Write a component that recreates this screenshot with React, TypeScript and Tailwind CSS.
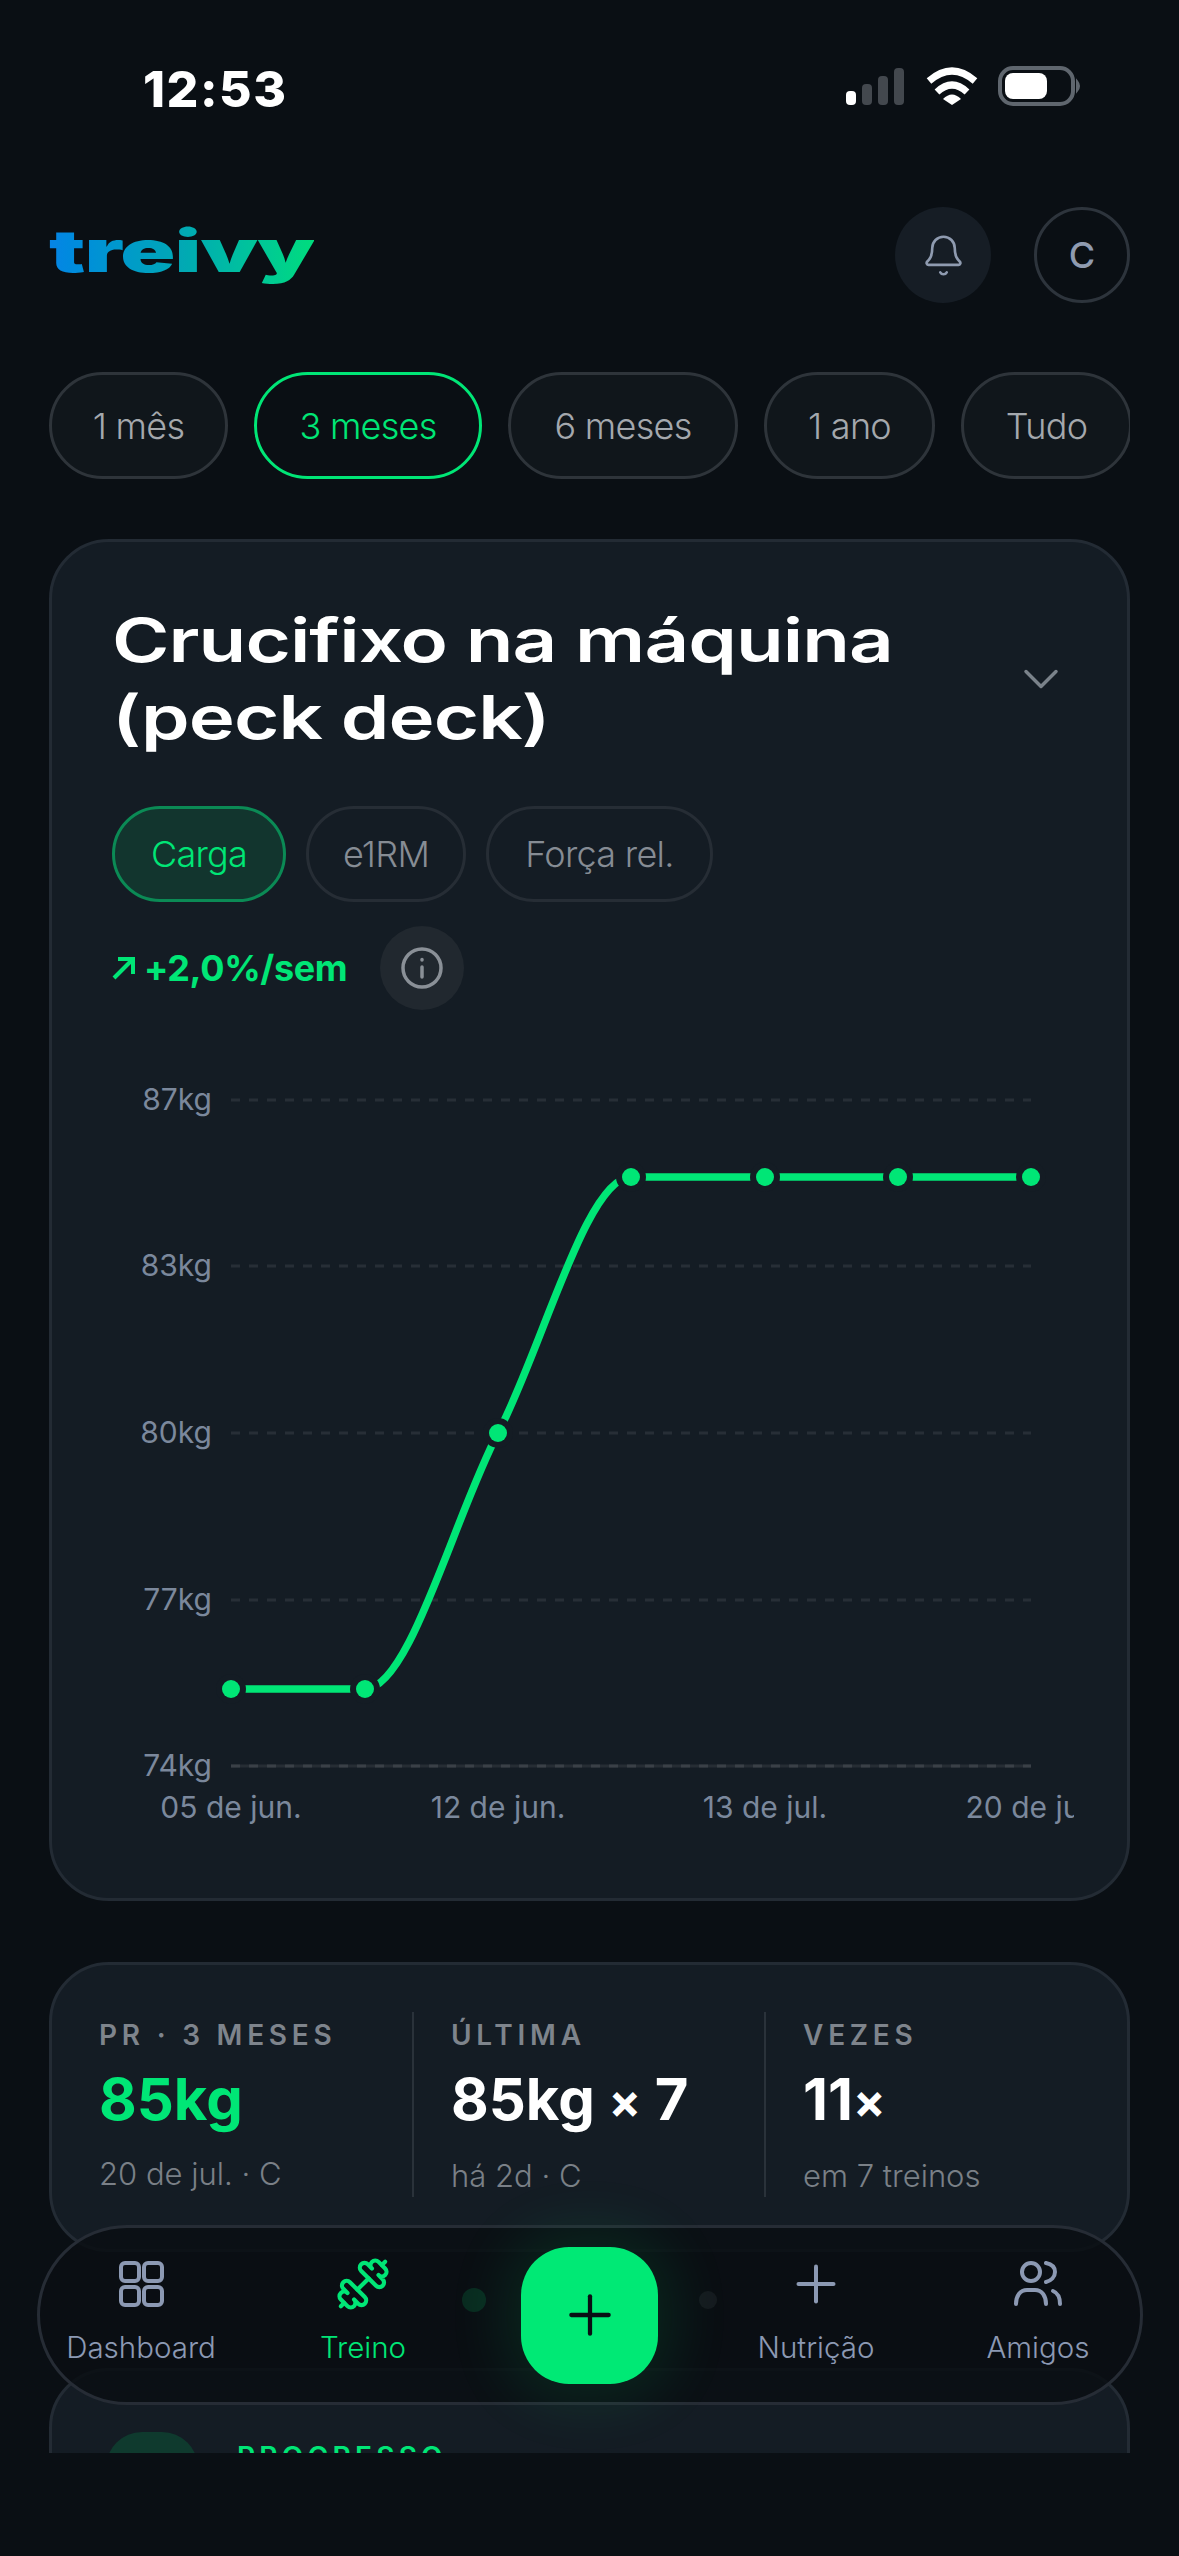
import { Bell, ChevronDown, Dumbbell, Plus } from "lucide-react";

const periodos = [
  { label: "1 mês", w: "w-[179px]" },
  { label: "3 meses", w: "w-[228px]" },
  { label: "6 meses", w: "w-[230px]" },
  { label: "1 ano", w: "w-[171px]" },
  { label: "Tudo", w: "w-[171px]" },
];
const metricas = [
  { label: "Carga", w: "w-[174px]" },
  { label: "e1RM", w: "w-[160px]" },
  { label: "Força rel.", w: "w-[227px]" },
];

const gridY = [
  { y: 1100, label: "87kg" },
  { y: 1266, label: "83kg" },
  { y: 1433, label: "80kg" },
  { y: 1600, label: "77kg" },
  { y: 1766, label: "74kg" },
];

const xLabels = [
  { x: 231, label: "05 de jun." },
  { x: 498, label: "12 de jun." },
  { x: 765, label: "13 de jul." },
  { x: 1031, label: "20 de jul." },
];

const pontos = [
  [231, 1689],
  [365, 1689],
  [498, 1433],
  [631, 1177],
  [765, 1177],
  [898, 1177],
  [1031, 1177],
];

const X = () => <span className="text-[48px] align-[2px]">×</span>;

const stats = [
  { label: "PR · 3 MESES", valor: <>85kg</>, sub: "20 de jul. · C", destaque: true },
  { label: "ÚLTIMA", valor: <>85kg <X /> 7</>, sub: "há 2d · C", destaque: false },
  { label: "VEZES", valor: <>11<X /></>, sub: "em 7 treinos", destaque: false },
];

function StatusIcons() {
  return (
    <svg width="236" height="50" viewBox="846 60 236 50" fill="none">
      <rect x="846" y="92" width="10" height="14" rx="4" fill="#fff" />
      <rect x="862" y="85" width="10" height="21" rx="4" fill="#43484e" />
      <rect x="878" y="77" width="10" height="29" rx="4" fill="#43484e" />
      <rect x="894" y="69" width="10" height="37" rx="4" fill="#43484e" />
      <path d="M929 82 Q952 62 975 82" stroke="#fff" strokeWidth="7" />
      <path d="M937 93 Q952 79 967 93" stroke="#fff" strokeWidth="7" />
      <path d="M943 100 Q952 91 961 100 L952 106 Z" fill="#fff" />
      <rect x="1000" y="69" width="73" height="36" rx="13" stroke="#5f666e" strokeWidth="4" />
      <rect x="1005" y="74" width="42" height="26" rx="8" fill="#fff" />
      <path d="M1077 82 Q1081 87 1077 92 Z" fill="#5f666e" stroke="#5f666e" strokeWidth="2" />
    </svg>
  );
}

function Grafico() {
  return (
    <svg width="962" height="780" viewBox="112 1060 962 780" className="block" fill="none">
      {gridY.map((g, i) => (
        <g key={g.label}>
          {i === 4 && <line x1="231" x2="1031" y1={g.y} y2={g.y} stroke="#262d34" strokeWidth="3" />}
          <line
            x1="231"
            x2="1031"
            y1={g.y}
            y2={g.y}
            stroke={i === 4 ? "#3a4047" : "#272e36"}
            strokeWidth="3"
            strokeDasharray="9 9"
          />
          <text x="212" y={g.y + 10} textAnchor="end" fontSize="30" fill="#7b889c">
            {g.label}
          </text>
        </g>
      ))}
      {xLabels.map((l) => (
        <text key={l.label} x={l.x} y="1818" textAnchor="middle" fontSize="30" fill="#7b889c">
          {l.label}
        </text>
      ))}
      <path
        d="M231 1689 L365 1689 C409.4 1689 453.6 1518 498 1433 C542.4 1348 586.6 1177 631 1177 L1031 1177"
        stroke="#00e676"
        strokeWidth="7.5"
      />
      {pontos.map(([x, y]) => (
        <g key={x}>
          <circle cx={x} cy={y} r="15" fill="#141c24" />
          <circle cx={x} cy={y} r="9" fill="#00e676" />
        </g>
      ))}
    </svg>
  );
}

function NavItem({ label, ativo, children }: { label: string; ativo?: boolean; children: React.ReactNode }) {
  return (
    <div className={`w-[180px] pb-[7px] flex flex-col items-center ${ativo ? "text-[#00e676]" : "text-[#8c99b3]"}`}>
      <div className="h-[56px] flex items-center justify-center">{children}</div>
      <span className="mt-[15px] text-[29.5px] leading-[40px] font-light whitespace-nowrap">{label}</span>
    </div>
  );
}

export default function App() {
  return (
    <div className="relative w-[1179px] h-[2556px] overflow-hidden bg-[#0a0f14] font-['Inter',sans-serif]">
      {/* Status bar */}
      <div className="h-[207px] pl-[143px] pr-[97px] pt-[59px] flex justify-between items-start">
        <span className="text-[50px] leading-[60px] font-extrabold text-white tracking-[0.03em]">12:53</span>
        <StatusIcons />
      </div>

      <div className="px-[49px]">
        {/* Header */}
        <div className="h-[96px] flex items-center justify-between">
          <span className="origin-left scale-x-[1.57] inline-block font-black text-[58px] leading-[70px] tracking-[-0.01em] -mt-[8px] bg-gradient-to-r from-[#0784e6] via-[#02a8b4] to-[#00dc7c] bg-clip-text text-transparent">
            treivy
          </span>
          <div className="flex gap-[43px]">
            <div className="w-[96px] h-[96px] rounded-full bg-[#161d25] flex items-center justify-center text-[#8f9bb0]">
              <Bell size={45} strokeWidth={1.4} />
            </div>
            <div className="w-[96px] h-[96px] rounded-full border-[3px] border-[#2d343c] flex items-center justify-center text-[36px] font-medium text-[#8f9bb0]">
              C
            </div>
          </div>
        </div>

        {/* Periodo */}
        <div className="mt-[69px] flex gap-[26px] w-[1081px] overflow-hidden">
          {periodos.map((p) => (
            <div
              key={p.label}
              className={`h-[107px] ${p.w} shrink-0 rounded-full border-[3px] flex items-center justify-center text-[36px] font-light tracking-[-0.02em] whitespace-nowrap ${
                p.label === "3 meses"
                  ? "border-[#00e676] text-[#00e676] bg-[#0a0f14]"
                  : "border-[#2e343a] text-[#a4a8ad] bg-[#10161b]"
              }`}
            >
              {p.label}
            </div>
          ))}
        </div>

        <div className="mt-[60px] h-[1914px] overflow-hidden">
          {/* Card do gráfico */}
          <div className="rounded-[60px] border-[3px] border-[#232b34] bg-[#141c24] pt-[60px] pl-[60px] pr-[53px] pb-[58px]">
            <div className="flex items-center justify-between">
              <h1 className="origin-left scale-x-[1.3] text-[60px] leading-[77px] font-semibold tracking-[-0.012em] text-white whitespace-nowrap">
                Crucifixo na máquina
                <br />
                (peck deck)
              </h1>
              <ChevronDown size={60} strokeWidth={1.4} className="text-[#7a828a] mr-[3px]" />
            </div>

            <div className="mt-[50px] flex gap-[20px]">
              {metricas.map((m, i) => (
                <div
                  key={m.label}
                  className={`h-[96px] ${m.w} rounded-full border-[3px] flex items-center justify-center text-[36px] font-light tracking-[-0.02em] whitespace-nowrap ${
                    i === 0
                      ? "border-[#0b8a55] bg-[#12352e] text-[#00e676]"
                      : "border-[#262d35] text-[#868c94]"
                  }`}
                >
                  {m.label}
                </div>
              ))}
            </div>

            <div className="mt-[24px] flex items-center gap-[33px] h-[84px]">
              <div className="flex items-center gap-[8px] text-[#00e676]">
                <svg width="24" height="24" viewBox="0 0 24 24" fill="none" stroke="currentColor" strokeWidth="4">
                  <path d="M2 22 L20 4" />
                  <path d="M6 3 H21 V18" />
                </svg>
                <span className="text-[36px] font-bold tracking-[-0.01em]">+2,0%/sem</span>
              </div>
              <div className="w-[84px] h-[84px] rounded-full bg-[#21282f] flex items-center justify-center">
                <svg width="44" height="44" viewBox="0 0 44 44" fill="none" stroke="#8a9097" strokeWidth="3.5" strokeLinecap="round">
                  <circle cx="22" cy="22" r="19" />
                  <path d="M22 21 V31" />
                  <path d="M22 13.5 V14" />
                </svg>
              </div>
            </div>

            <div className="mt-[50px]">
              <Grafico />
            </div>
          </div>

          {/* Stats */}
          <div className="mt-[61px] h-[290px] rounded-[60px] border-[3px] border-[#232b34] bg-[#141c24] pt-[47px] flex">
            {stats.map((s, i) => (
              <div
                key={s.label}
                className={`h-[185px] flex flex-col ${i === 0 ? "w-[360px] pl-[47px]" : "w-[352px] pl-[37px] border-l-[2px] border-[#2a323a]"}`}
              >
                <span className="pt-[6px] text-[28px] leading-[34px] font-semibold tracking-[0.17em] text-[#7e848c] whitespace-nowrap">
                  {s.label}
                </span>
                <span className={`mt-[12px] text-[58px] leading-[70px] font-bold whitespace-nowrap ${s.destaque ? "text-[#00e676]" : "text-white"}`}>
                  {s.valor}
                </span>
                <span className="mt-[20px] text-[31px] leading-[40px] font-light text-[#7a8087] whitespace-nowrap">
                  {s.sub}
                </span>
              </div>
            ))}
          </div>

          {/* Paginação */}
          <div className="h-[116px] pb-[20px] flex items-center justify-center">
            <div className="w-[255px] flex items-center justify-between">
              <div className="w-[24px] h-[24px] rounded-full bg-[#00e676]" />
              <div className="w-[18px] h-[18px] rounded-full bg-[#5f656b]" />
            </div>
          </div>

          {/* Progresso */}
          <div className="h-[300px] rounded-[60px] border-[3px] border-[#232b34] bg-[#141c24] pt-[61px] pl-[54px] flex gap-[39px]">
            <div className="w-[92px] h-[92px] rounded-[36px] bg-[#0f3a2e]" />
            <span className="pt-[8px] text-[28px] leading-[34px] font-semibold tracking-[0.15em] text-[#00e676]">PROGRESSO</span>
          </div>
        </div>
      </div>

      {/* Nav */}
      <nav className="absolute left-[37px] top-[2225px] w-[1106px] h-[180px] rounded-[90px] border-[3px] border-[#262c35] bg-[#0a0f14]/[0.87] pl-[11px] flex items-center">
        <NavItem label="Dashboard">
          <svg width="46" height="46" viewBox="0 0 46 46" fill="none" stroke="currentColor" strokeWidth="4">
            <rect x="3" y="2" width="18" height="18" rx="4" />
            <rect x="26" y="2" width="18" height="18" rx="4" />
            <rect x="3" y="26" width="18" height="18" rx="4" />
            <rect x="26" y="26" width="18" height="18" rx="4" />
          </svg>
        </NavItem>
        <div className="ml-[42px]">
          <NavItem label="Treino" ativo>
            <Dumbbell size={56} strokeWidth={1.8} />
          </NavItem>
        </div>
        <div className="mx-[68px] w-[137px] h-[137px] shrink-0 rounded-[48px] bg-[#00e975] shadow-[0_0_60px_16px_rgba(0,230,118,0.11)] flex items-center justify-center text-[#0a0f14]">
          <Plus size={64} strokeWidth={1.6} />
        </div>
        <NavItem label="Nutrição">
          <Plus size={60} strokeWidth={1.6} />
        </NavItem>
        <div className="ml-[42px]">
          <NavItem label="Amigos">
            <svg width="50" height="46" viewBox="0 0 50 46" fill="none" stroke="currentColor" strokeWidth="4" strokeLinecap="round">
              <circle cx="18" cy="11" r="9" />
              <path d="M33 2 C38 3 42 6 42 11 C42 16 38 20 33 21" />
              <path d="M3 43 C3 35 7 29 14 29 H22 C29 29 33 35 33 43" />
              <path d="M40 30 C45 32 47 37 47 43" />
            </svg>
          </NavItem>
        </div>
      </nav>
    </div>
  );
}
